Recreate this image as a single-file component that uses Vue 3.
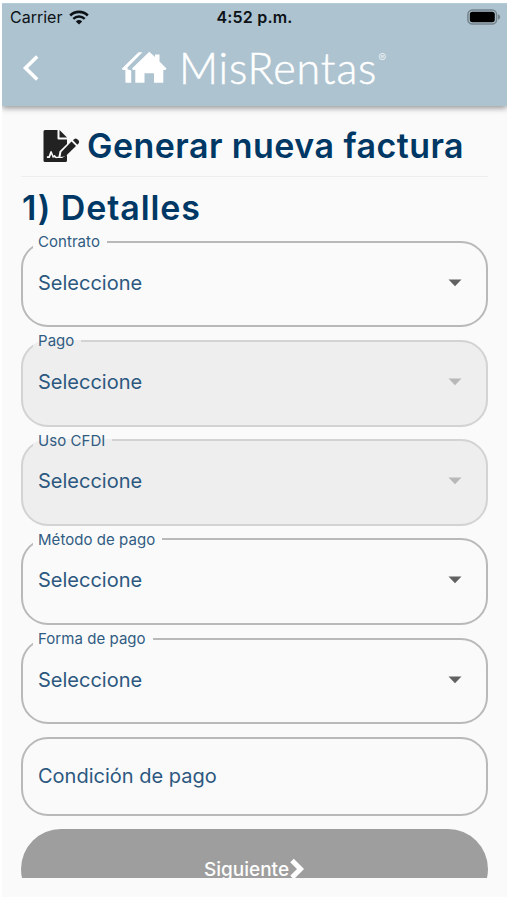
<script setup>
const fields = [
  { label: 'Contrato', disabled: false },
  { label: 'Pago', disabled: true },
  { label: 'Uso CFDI', disabled: true },
  { label: 'Método de pago', disabled: false },
  { label: 'Forma de pago', disabled: false },
]
</script>

<template>
  <div class="screen">
    <header class="top">
      <div class="status">
        <div class="carrier">
          <span>Carrier</span>
          <svg class="wifi" viewBox="0 0 20 15" width="20" height="15">
            <path d="M1.2 5.5C6 .7 14 .7 18.800 5.500" fill="none" stroke="#0c1216" stroke-width="2.600" />
            <path d="M4.300 8.800C7.500 5.800 12.500 5.800 15.700 8.800" fill="none" stroke="#0c1216" stroke-width="2.500" />
            <path d="M10 14.600L6.800 11.400Q10 8.800 13.200 11.400Z" fill="#0c1216" />
          </svg>
        </div>
        <span class="time">4:52 p.m.</span>
        <svg class="battery" viewBox="0 0 34 16" width="34" height="16">
          <rect x="0.900" y="0.900" width="28.700" height="14.200" rx="4.500" fill="none" stroke="#75838b" stroke-width="1.500" />
          <rect x="2.800" y="2.800" width="25" height="10.400" rx="2.600" fill="#000" />
          <path d="M31 5.300Q33.200 6 33.200 8T31 10.700Z" fill="#75838b" />
        </svg>
      </div>
      <div class="bar">
        <svg class="back" viewBox="0 0 18 28" width="18" height="28">
          <path d="M15.200 2.500L3.500 14L15.200 25.500" fill="none" stroke="#fff" stroke-width="3.600" />
        </svg>
        <div class="brand">
          <svg class="houses" viewBox="0 0 46 34" width="46" height="34">
            <path d="M28.300 .8L34 6V3.500H38.500V10.500L45.500 17.500L44.500 19H42.300V31.800H33V22.300H23.500V31.800H14.300V19H12L11 17.500Z" fill="#fff" />
            <path d="M17.500 1.200H21.500L6.500 16.500V19H1.500L1 17.500Z" fill="#fff" />
            <path d="M4.300 17.500L10.200 19.500V31.800H4.500Z" fill="#fff" />
          </svg>
          <span class="name">MisRentas</span><span class="reg">®</span>
        </div>
      </div>
    </header>

    <main class="content">
      <h1 class="title">
        <svg class="doc" viewBox="0 0 37 34" width="37" height="34">
          <path d="M2 1H14.500V9.500Q14.500 10.500 15.500 10.500H24V15L16.500 22.300L15.500 27.400Q13.500 28.300 12.600 26.900Q11.900 25.200 10.500 26.700L8.800 22.400Q8 21.400 7.300 22.600L5.600 27.300H3.900V29H6.800L8.300 25.200L9.800 29Q11.200 27.500 12 28.700Q12.800 29.400 14 29H19L24 26V31.500Q24 33 22.500 33H2Q.5 33 .5 31.500V2.500Q.5 1 2 1Z" fill="#222" />
          <path d="M16.500 1L24 8.500H16.500Z" fill="#222" />
          <path d="M28.500 12.600L33 17.100L22.500 27.200L17.500 28L18.400 22.900Z" fill="#222" />
          <path d="M30 11.300L31.200 10.200Q32.700 8.900 34.200 10.200L35.600 11.600Q36.800 13 35.500 14.500L34.300 15.700Z" fill="#222" />
        </svg>
        <span>Generar nueva factura</span>
      </h1>
      <h2 class="section">1) Detalles</h2>
      <form class="form">
        <fieldset v-for="f in fields" :key="f.label" class="field" :class="{ disabled: f.disabled }">
          <legend>{{ f.label }}</legend>
          <div class="select">
            <span>Seleccione</span>
            <svg class="caret" viewBox="0 0 14 8" width="14" height="8"><path d="M.5 .5H13.500L7 7.300Z" /></svg>
          </div>
        </fieldset>
        <div class="input">Condición de pago</div>
        <div class="cut">
          <div class="next">
            <span>Siguiente</span>
            <svg viewBox="0 0 16 22" width="16" height="22"><path d="M3 2.500L11.500 11L3 19.500" fill="none" stroke="#fff" stroke-width="5" /></svg>
          </div>
        </div>
      </form>
    </main>
  </div>
</template>

<style>
body { background: #fff; }
</style>

<style scoped>
* { box-sizing: border-box; }
.screen {
  width: 505px;
  height: 894px;
  margin: 3px 0 3px 2px;
  background: #fafafa;
  font-family: Inter, "Liberation Sans", sans-serif;
  color: #003865;
  overflow: hidden;
  display: flow-root;
}
.top {
  position: relative;
  height: 103px;
  background: #adc3d0;
  border-top: 1px solid #b4ccda;
  box-shadow: 0 2px 6px rgba(0, 0, 0, 0.42);
}
.status {
  display: grid;
  grid-template-columns: 1fr auto 1fr;
  align-items: center;
  height: 26px;
  padding: 0 6px 0 8px;
  color: #0c1216;
}
.carrier { display: flex; align-items: center; gap: 7px; font-size: 16px; line-height: 20px; }
.time { margin-left: -2px; font-size: 16px; font-weight: 600; letter-spacing: 0.2px; }
.battery { justify-self: end; }
.bar { display: flex; align-items: center; height: 77px; padding: 0 0 2px 20px; }
.brand { display: flex; align-items: center; margin-left: 81px; color: #fff; }
.name {
  font-family: Lato, sans-serif;
  font-weight: 300;
  font-size: 43px;
  line-height: 50px;
  letter-spacing: 0.9px;
  margin-left: 12px;
  white-space: nowrap;
  -webkit-text-stroke: 0.5px #fff;
}
.reg { font-size: 12px; line-height: 12px; align-self: flex-start; margin: 9px 0 0 1px; opacity: 0.75; }
.content { padding: 17px 19px 0; }
.title {
  display: flex;
  align-items: center;
  height: 54px;
  margin: 0;
  padding: 0 0 8px 22px;
  border-bottom: 1px solid #eeeeee;
  font-size: 34px;
  line-height: 40px;
  font-weight: 600;
  letter-spacing: 0.450px;
  white-space: nowrap;
}
.title span { margin-left: 7px; }
.section {
  margin: 10px 0 0 1px;
  font-size: 34px;
  line-height: 42px;
  font-weight: 600;
  letter-spacing: 0.900px;
}
.form { display: flex; flex-direction: column; margin-top: 4px; }
.field {
  min-width: 0;
  height: 94.300px;
  margin: 0 0 5px;
  padding: 0 24px 0 10px;
  border: 2px solid #b9b9b9;
  border-radius: 27px;
}
.field legend {
  height: 17px;
  padding: 0 7px 0 5px;
  font-size: 15px;
  line-height: 17px;
  letter-spacing: 0.050px;
  color: #315c82;
}
.select {
  display: flex;
  align-items: center;
  justify-content: space-between;
  height: 65px;
  padding-left: 5px;
  font-size: 20px;
  color: #2c587f;
}
.caret { fill: #616161; }
.disabled { background: #eee; border-color: #d3d3d3; }
.disabled .caret { fill: #b8b8b8; }
.input {
  height: 79px;
  margin-top: 8px;
  padding: 0 15px;
  border: 2px solid #b9b9b9;
  border-radius: 27px;
  font-size: 20px;
  line-height: 74px;
  color: #2c587f;
}
.cut { height: 49px; margin-top: 13px; overflow: hidden; }
.next {
  display: flex;
  align-items: center;
  justify-content: center;
  height: 80px;
  border-radius: 40px;
  background: #9e9e9e;
  color: #fff;
  font-size: 19px;
  font-weight: 500;
}
</style>
